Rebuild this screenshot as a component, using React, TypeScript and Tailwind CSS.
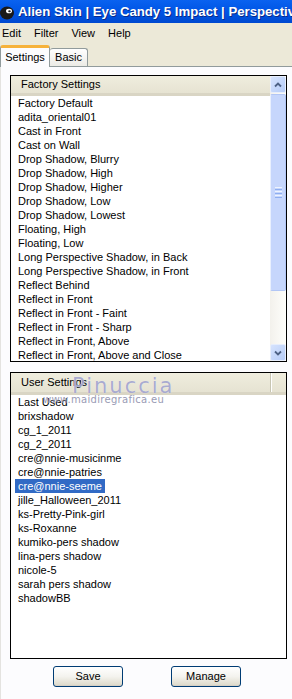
import React from "react";

const factory = [
  "Factory Default",
  "adita_oriental01",
  "Cast in Front",
  "Cast on Wall",
  "Drop Shadow, Blurry",
  "Drop Shadow, High",
  "Drop Shadow, Higher",
  "Drop Shadow, Low",
  "Drop Shadow, Lowest",
  "Floating, High",
  "Floating, Low",
  "Long Perspective Shadow, in Back",
  "Long Perspective Shadow, in Front",
  "Reflect Behind",
  "Reflect in Front",
  "Reflect in Front - Faint",
  "Reflect in Front - Sharp",
  "Reflect in Front, Above",
  "Reflect in Front, Above and Close",
];

const user = [
  "Last Used",
  "brixshadow",
  "cg_1_2011",
  "cg_2_2011",
  "cre@nnie-musicinme",
  "cre@nnie-patries",
  "cre@nnie-seeme",
  "jille_Halloween_2011",
  "ks-Pretty-Pink-girl",
  "ks-Roxanne",
  "kumiko-pers shadow",
  "lina-pers shadow",
  "nicole-5",
  "sarah pers shadow",
  "shadowBB",
];

function Item({ text, selected }: { text: string; selected?: boolean }) {
  return (
    <div className="h-[14px] leading-[14px] pl-[4px] whitespace-nowrap">
      <span
        className={
          "inline-block h-[14px] px-[3px] " +
          (selected ? "bg-[#316ac5] text-white" : "text-black")
        }
      >
        {text}
      </span>
    </div>
  );
}

function Header({ title }: { title: string }) {
  return (
    <div className="h-[22px] bg-gradient-to-b from-[#efedde] to-[#e6e3d2] border-b-[3px] border-[#d9d5c4] flex items-center pl-[10px] text-black">
      {title}
    </div>
  );
}

function ScrollBtn({ dir }: { dir: "up" | "down" }) {
  return (
    <div className="h-[17px] w-[16px] rounded-[2px] border border-[#e7eefc] bg-gradient-to-br from-[#d6e3fd] to-[#b6ccf8] flex items-center justify-center">
      <svg width="8" height="6" viewBox="0 0 8 6">
        {dir === "up" ? (
          <path d="M1 4.5 L4 1.5 L7 4.5" fill="none" stroke="#4d6185" strokeWidth="1.8" />
        ) : (
          <path d="M1 1.5 L4 4.5 L7 1.5" fill="none" stroke="#4d6185" strokeWidth="1.8" />
        )}
      </svg>
    </div>
  );
}

function Scrollbar() {
  return (
    <div className="w-[16px] flex flex-col bg-gradient-to-r from-[#f3f1ec] to-[#fefefb]">
      <ScrollBtn dir="up" />
      <div className="h-[197px] mt-[1px] rounded-[2px] border border-[#b2c6f5] border-l-[#e9f0fe] bg-[#c6d6fc] flex flex-col items-center justify-center gap-[1px]">
        <div className="w-[7px] h-[1px] bg-[#eef4fe]" />
        <div className="w-[7px] h-[1px] bg-[#8eaef0]" />
        <div className="w-[7px] h-[1px] bg-[#eef4fe]" />
        <div className="w-[7px] h-[1px] bg-[#8eaef0]" />
        <div className="w-[7px] h-[1px] bg-[#eef4fe]" />
        <div className="w-[7px] h-[1px] bg-[#8eaef0]" />
      </div>
      <div className="flex-1" />
      <ScrollBtn dir="down" />
    </div>
  );
}

function XPButton({ label }: { label: string }) {
  return (
    <div className="w-[70px] h-[21px] rounded-[3px] border border-[#003c74] bg-gradient-to-b from-[#ffffff] via-[#f4f3ee] to-[#dcd8c8] flex items-center justify-center text-black shadow-[inset_0_-1px_0_#d6d0c5]">
      {label}
    </div>
  );
}

export default function App() {
  return (
    <div
      className="w-[292px] h-[699px] overflow-hidden bg-[#fcfcfe] flex flex-col text-[11px]"
      style={{ fontFamily: '"Liberation Sans", Arial, sans-serif' }}
    >
      {/* Title bar */}
      <div className="h-[23px] shrink-0 bg-gradient-to-b from-[#0a62f0] via-[#0055e5] to-[#0049d0] flex items-center whitespace-nowrap overflow-hidden">
        <svg width="18" height="18" viewBox="0 0 18 18" className="shrink-0 ml-[-1px]">
          <ellipse cx="8" cy="10" rx="7" ry="6.5" fill="#1a1a1a" />
          <ellipse cx="10" cy="8" rx="3" ry="2.3" fill="#ffffff" />
          <ellipse cx="10.5" cy="8.2" rx="1.3" ry="1" fill="#222" />
        </svg>
        <span className="ml-[1px] text-white font-bold text-[13.2px] [text-shadow:1px_1px_0_#0a2a8a]">
          Alien Skin | Eye Candy 5 Impact | Perspective Shadow
        </span>
      </div>

      {/* Menu bar */}
      <div className="h-[20px] shrink-0 bg-[#ece9d8] flex items-center pl-[2px] gap-[13px] text-black">
        <span>Edit</span>
        <span>Filter</span>
        <span>View</span>
        <span>Help</span>
      </div>

      {/* Tabs */}
      <div className="h-[23px] shrink-0 bg-[#ece9d8] flex items-end">
        <div className="relative z-10 -mb-px w-[50px] h-[22px] bg-[#fcfcfe] border-x border-[#919b9c] rounded-t-[3px] border-t-[3px] border-t-[#f6b23b] flex items-center justify-center text-black">
          Settings
        </div>
        <div className="w-[38px] h-[18px] bg-gradient-to-b from-[#ffffff] to-[#ecebe5] border-t border-r border-[#919b9c] rounded-t-[3px] flex items-center justify-center text-black">
          Basic
        </div>
      </div>

      {/* Panel */}
      <div className="relative flex-1 border-t border-l border-[#919b9c] border-l-[#e4e3e0] pl-[9px] pr-[5px] pt-[8px] flex flex-col">
        {/* Factory Settings box */}
        <div className="h-[287px] border border-black bg-white flex overflow-hidden">
          <div className="flex-1 flex flex-col overflow-hidden">
            <Header title="Factory Settings" />
            <div>
              {factory.map((t) => (
                <Item key={t} text={t} />
              ))}
            </div>
          </div>
          <Scrollbar />
        </div>

        {/* User Settings box */}
        <div className="mt-[10px] h-[287px] border border-black bg-white flex flex-col overflow-hidden">
          <div className="h-[22px] flex bg-gradient-to-b from-[#efedde] to-[#e6e3d2] border-b-[3px] border-[#d9d5c4]">
            <div className="flex-1 flex items-center pl-[10px] text-black border-r border-[#c7c5b2]">
              User Settings
            </div>
            <div className="w-[15px] border-l border-white" />
          </div>
          <div>
            {user.map((t) => (
              <Item key={t} text={t} selected={t === "cre@nnie-seeme"} />
            ))}
          </div>
        </div>

        {/* Buttons */}
        <div className="mt-[7px] flex pl-[43px] gap-[48px]">
          <XPButton label="Save" />
          <XPButton label="Manage" />
        </div>

        {/* Watermark */}
        <div
          className="absolute left-[71px] top-[304px] pointer-events-none text-[21px] tracking-[2px] text-[#a3a5cf] opacity-90 [text-shadow:0_0_1px_#ffffff]"
          style={{ fontFamily: '"DejaVu Sans", sans-serif' }}
        >
          Pinuccia
        </div>
        <div
          className="absolute left-[42px] top-[325px] pointer-events-none text-[10px] tracking-[0.3px] text-[#8f91ad] opacity-90"
          style={{ fontFamily: '"DejaVu Sans", sans-serif' }}
        >
          www.maidiregrafica.eu
        </div>
      </div>
    </div>
  );
}
